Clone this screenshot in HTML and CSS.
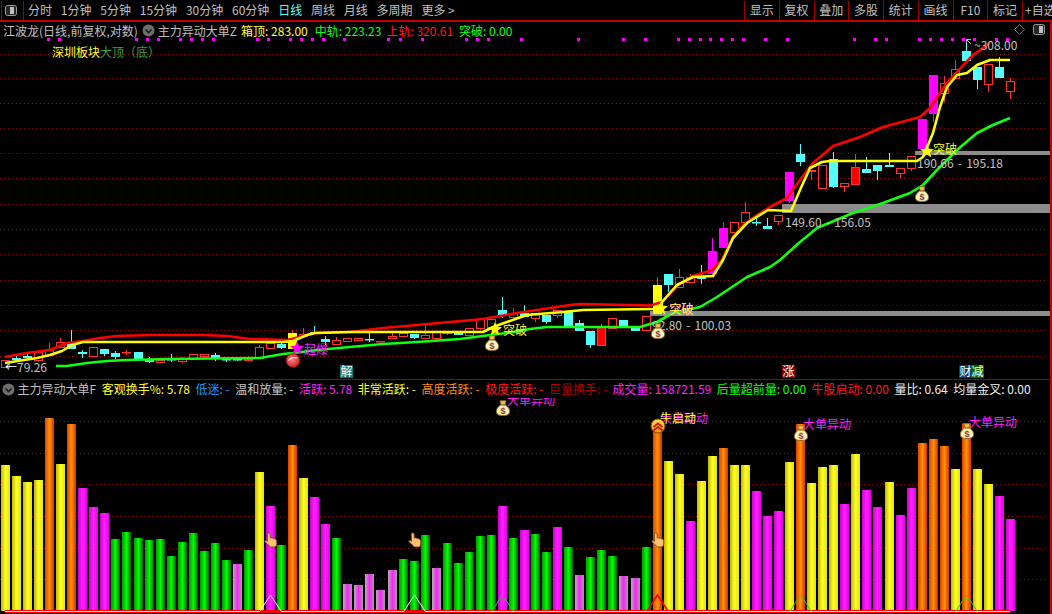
FILE: index.html
```html
<!DOCTYPE html>
<html lang="zh-CN">
<head>
<meta charset="utf-8">
<title>江波龙 日线</title>
<link rel="stylesheet" href="styles.css">
</head>
<body>
<div class="app">
  <header class="toolbar">
    <span class="panel-toggle">
      <svg width="12" height="11" viewBox="0 0 12 11"><rect x="0.5" y="0.5" width="11" height="10" rx="2" class="tg-box"/><rect x="5" y="2" width="4" height="7" class="tg-fill"/></svg>
    </span>
    <nav class="periods">
      <span>分时</span><span>1分钟</span><span>5分钟</span><span>15分钟</span><span>30分钟</span><span>60分钟</span>
      <span class="active">日线</span><span>周线</span><span>月线</span><span>多周期</span><span>更多 &gt;</span>
    </nav>
    <nav class="tools">
      <span>显示</span><span>复权</span><span>叠加</span><span>多股</span><span>统计</span><span>画线</span><span>F10</span><span>标记</span><span class="last">+自选</span>
    </nav>
  </header>

  <section class="pane price-pane">
    <svg id="price" class="chart" viewBox="0 22 1050 357" width="1050" height="357"></svg>
    <div class="legend">
      <span class="stock">江波龙(日线,前复权,对数)</span>
      <svg class="chev" width="13" height="13" viewBox="0 0 13 13"><circle cx="6.5" cy="6.5" r="6" class="chev-ball"/><path d="M3.5 5.5 6.5 8.5 9.5 5.5" class="chev-mark"/></svg>
      <span class="name">主力异动大单Z</span>
      <span class="yellow lg1">箱顶: 283.00</span>
      <span class="green lg2">中轨: 223.23</span>
      <span class="red lg3">上轨: 320.61</span>
      <span class="green lg4">突破: 0.00</span>
    </div>
    <div class="corner-icons">
      <svg width="11" height="11" viewBox="0 0 11 11"><path d="M5.5 .5 10.5 5.5 5.5 10.5 .5 5.5Z" class="dia"/></svg>
      <svg width="12" height="11" viewBox="0 0 12 11"><rect x="0.5" y="0.5" width="11" height="10" rx="2" class="tg-box"/><rect x="6" y="2" width="4" height="7" class="tg-fill"/></svg>
    </div>
  </section>

  <section class="pane ind-pane">
    <svg id="ind" class="chart" viewBox="0 380 1050 234" width="1050" height="234"></svg>
    <div class="legend ind-legend">
      <svg class="chev" width="13" height="13" viewBox="0 0 13 13"><circle cx="6.5" cy="6.5" r="6" class="chev-ball"/><path d="M3.5 5.5 6.5 8.5 9.5 5.5" class="chev-mark"/></svg>
      <span class="name">主力异动大单F</span>
      <span class="yellow">客观换手%: 5.78</span>
      <span class="blue">低迷: -</span>
      <span class="gray">温和放量: -</span>
      <span class="magenta">活跃: 5.78</span>
      <span class="yellow">非常活跃: -</span>
      <span class="orange">高度活跃: -</span>
      <span class="red">极度活跃: -</span>
      <span class="darkred">巨量换手: -</span>
      <span class="magenta">成交量: 158721.59</span>
      <span class="green">后量超前量: 0.00</span>
      <span class="red">牛股启动: 0.00</span>
      <span class="white">量比: 0.64</span>
      <span class="white">均量金叉: 0.00</span>
    </div>
  </section>
</div>
<script src="chart.js"></script>
</body>
</html>
```
FILE: styles.css
```css
* { box-sizing: border-box; }
html, body { margin: 0; padding: 0; background: #000; }
body { font-family: "Noto Sans CJK SC", "Liberation Sans", sans-serif; font-size: 12px; line-height: 16px; color: #c0c0c0; }
.app { width: 1052px; height: 614px; background: #000; display: flex; flex-direction: column; overflow: hidden; }

.toolbar { flex: 0 0 22px; height: 22px; display: flex; align-items: stretch; border-bottom: 2px solid #c00000; }
.panel-toggle { margin-left: 1px; width: 23px; margin-top: 1px; padding-right: 3px; border-left: 1px solid #a00000; border-right: 1px solid #a00000; display: flex; align-items: center; justify-content: center; }
.tg-box { fill: #262626; stroke: #9a9a9a; }
.tg-fill { fill: #c0c0c0; }
.periods { display: flex; gap: 8.8px; padding-left: 4px; align-items: center; white-space: nowrap; }
.periods .active { color: #54ffff; }
.tools { margin-left: auto; width: 308px; display: flex; overflow: hidden; padding-top: 1px; }
.tools span { flex: 0 0 34.75px; border-left: 1px solid #a00000; text-align: center; line-height: 18px; white-space: nowrap; }
.tools .last { text-align: left; padding-left: 2px; }

.pane { position: relative; border-right: 2px solid #c00000; width: 1052px; }
.price-pane { height: 358px; border-bottom: 1px solid #a00000; }
.ind-pane { height: 234px; }
.chart { position: absolute; left: 0; top: 0; display: block; }

.legend { position: relative; display: flex; align-items: center; height: 17px; padding-left: 3px; white-space: nowrap; }
.ind-legend { height: 18px; background: #000; padding-left: 2px; gap: 5.5px; }
.chev { flex: none; margin: 0 3px 0 4px; }
.ind-legend .chev { margin: 0 -3px 0 0; }
.chev-ball { fill: #6e6e6e; }
.chev-mark { fill: none; stroke: #1c1c1c; stroke-width: 1.6; }
.lg1 { margin-left: 4px; }
.lg2 { margin-left: 7px; }
.lg3 { margin-left: 5px; }
.lg4 { margin-left: 6px; }
.corner-icons { position: absolute; right: 5px; top: 2px; display: flex; align-items: center; gap: 8px; }
.dia { fill: none; stroke: #777; }

.yellow { color: #ffff30; }
.green { color: #16ff16; }
.red { color: #ff1a1a; }
.blue { color: #1e96ff; }
.gray { color: #c8c8c8; }
.magenta { color: #ff20ff; }
.orange { color: #ff8a1a; }
.darkred { color: #b00000; }
.white { color: #f0f0f0; }

.grid { stroke: #8a0f0f; stroke-width: 1; stroke-dasharray: 1 3; }
.box { fill: #8c8c8c; }
.line { fill: none; stroke-width: 2.6; stroke-linejoin: round; }
.l-red { stroke: #ff0000; }
.l-yellow { stroke: #ffff00; }
.l-green { stroke: #10ff10; }
.c-c { fill: #54fcfc; stroke: #54fcfc; }
.c-r { fill: #000; stroke: #ff3232; }
.c-R { fill: #ff0000; stroke: #ff3232; }
.c-m { fill: #ff00ff; stroke: #ff00ff; }
.c-y { fill: #ffff00; stroke: #ff3232; }
.c-y.body { stroke: #ffff00; }
.wick { stroke-width: 1; fill: none; }
.dot { fill: #ff00ff; }
.t { font-family: "Noto Sans CJK SC", "Liberation Sans", sans-serif; font-size: 12px; }
.t-range { word-spacing: 1.5px; }
.t-gray { fill: #c0c0c0; }
.t-yellow { fill: #ffff30; }
.t-magenta { fill: #ff20ff; }
.t-board { fill: #ffff30; }
.t-top { fill: #3ca03c; }
.t-white { fill: #fff; }
.arrow { stroke: #c0c0c0; fill: none; }
.badge-teal { fill: #007878; }
.badge-red { fill: #800000; }
.badge-blue { fill: #0c3c6c; }
.badge-green { fill: #006c00; }
.star-y { fill: #ffff00; }
.star-m { fill: #ff00ff; }
.tri { fill: none; stroke-width: 1; }
.tri-w { stroke: #fff; }
.tri-g { stroke: #20d020; }
.tri-r { stroke: #ff0000; stroke-width: 1.6; }
.baseline { fill: #ff0000; }
.base-white { fill: #ffe0e0; }
.bag-body { fill: #fff2b8; stroke: #8a6a28; stroke-width: 1; }
.bag-neck { fill: #f0c040; stroke: #8a6a28; stroke-width: .8; }
.bag-s { fill: #8a3a3a; font-family: "Liberation Sans", sans-serif; font-size: 9px; font-weight: bold; text-anchor: middle; }
.hand { fill: #ffc070; stroke: #7a4a18; stroke-width: 1; stroke-linejoin: round; }
.ball { fill: url(#ballGrad); stroke: #601010; stroke-width: .5; }
.ball-hl { fill: none; stroke: #fff; stroke-width: 1.2; opacity: .85; }
.gold { fill: url(#goldGrad); stroke: #7a4a10; stroke-width: 1; }
.gold-mark { fill: none; stroke: #c02010; stroke-width: 1.8; }
```
FILE: chart.js
```javascript
var X = function (i) { return 5.5 + 11.044 * i; };
var NS_DEFS =
  '<defs>' +
  grad('gy', '#c0b800', '#ffff28', '#e4e400') +
  grad('go', '#e04000', '#ff9400', '#d83000') +
  grad('gg', '#009800', '#00ff00', '#006000') +
  grad('gm', '#d000d0', '#ff20ff', '#e800e8') +
  grad('gx', '#b0b0b0', '#ff20ff', '#a0a0a0') +
  '<radialGradient id="ballGrad" cx=".45" cy=".45" r=".6"><stop offset="0" stop-color="#ff8080"/><stop offset="1" stop-color="#c81818"/></radialGradient>' +
  '<linearGradient id="goldGrad" x2="0" y2="1"><stop offset="0" stop-color="#ffe060"/><stop offset="1" stop-color="#f09000"/></linearGradient>' +
  '<symbol id="bag" viewBox="0 0 14 16" overflow="visible">' +
  '<path class="bag-body" d="M4.5 5C1 7.5 0 10 .5 12.5 1 15 4 15.5 7 15.5S13 15 13.5 12.5C14 10 13 7.500 9.500 5Z"/>' +
  '<path class="bag-neck" d="M4 .7H10L9 4.800H5Z"/>' +
  '<text class="bag-s" x="7" y="13.500">$</text></symbol>' +
  '<symbol id="hand" viewBox="0 0 14 16" overflow="visible">' +
  '<path class="hand" d="M3 1C3.300 .2 5.700 .2 6 1L6.300 6C7 5.400 8 5.500 8.400 6.200 9 5.700 10 6 10.300 6.800 11.300 6.500 12.700 7.200 13 8.500 13.500 10.500 13.300 13.300 12 15.500H6.500C5 14.500 3 12 .8 10.200 .1 9.400 .7 8 1.800 8.300L3.300 9.500Z"/>' +
  '</symbol>' +
  '<symbol id="star" viewBox="0 0 14 14" overflow="visible"><path d="M7 0 8.900 4.800 14 5.200 10 8.400 11.400 13.500 7 10.600 2.600 13.500 4 8.400 0 5.200 5.100 4.800Z"/></symbol>' +
  '</defs>';

function grad(id, a, b, c) {
  return '<linearGradient id="' + id + '"><stop offset="0" stop-color="' + a + '"/><stop offset=".5" stop-color="' + b + '"/><stop offset="1" stop-color="' + c + '"/></linearGradient>';
}
function text(x, y, cls, s) { return '<text class="t ' + cls + '" x="' + x + '" y="' + y + '">' + s + '</text>'; }
function use(id, x, y, w, h, cls) { return '<use href="#' + id + '" x="' + (x - w / 2) + '" y="' + (y - h / 2) + '" width="' + w + '" height="' + h + '"' + (cls ? ' class="' + cls + '"' : '') + '/>'; }
function poly(cls, pts) { return '<polyline class="line ' + cls + '" points="' + pts + '"/>'; }
function hline(y) { return '<line class="grid" x1="0" x2="1048" y1="' + y + '.5" y2="' + y + '.5"/>'; }

/* [type, bodyTop, bodyBottom, wickTop, wickBottom] by bar index */
var candles = [
  ['r',360,367,360,367],['c',358,359,355,361],['c',356,357,354,358],['r',352,360,352,362],['r',350,355,343,355],
  ['r',342,347,338,347],['c',342,348,330,348],['c',352,353,350,358],['r',347,356,347,356],['c',349,353,349,356],
  ['c',353,356,351,359],['r',352,352,350,355],['c',352,358,352,361],['c',360,361,357,363],['r',360,362,360,363],
  ['c',359,359,354,362],['r',358,361,357,363],['r',354,359,354,359],['r',354,356,354,356],['c',355,358,353,361],
  ['c',359,359,358,362],['c',359,359,357,361],['r',359,360,356,361],['r',347,358,345,358],['r',343,348,343,348],
  ['c',344,347,342,349],['y',333,348,330,348],['r',334,336,328,336],['c',332,333,326,333],['c',339,341,336,345],
  ['r',340,344,337,344],['r',338,341,338,341],['r',338,340,338,340],['c',339,339,333,342],['r',341,341,341,342],
  ['r',336,338,333,338],['r',333,336,331,336],['c',334,337,334,339],['r',335,338,325,338],['r',332,338,332,340],
  ['r',332,333,331,335],['c',331,334,331,335],['r',328,335,328,336],['r',319,328,319,330],['r',319,328,317,328],
  ['c',310,315,297,318],['r',313,317,308,317],['c',313,316,305,316],['r',313,318,313,322],['c',315,321,315,324],
  ['r',310,315,310,318],['c',312,325,312,325],['c',323,330,320,330],['c',331,344,331,348],['R',327,345,324,345],
  ['r',318,328,318,328],['c',320,327,320,327],['c',326,330,326,330],['r',316,330,316,330],['y',285,313,277,313],
  ['c',274,284,274,292],['r',277,287,269,287],['r',277,282,274,282],['c',277,278,265,284],['m',251,273,238,273],
  ['m',228,247,222,247],['r',222,232,222,235],['r',212,222,202,222],['c',222,222,218,226],['c',226,228,218,228],
  ['r',215,221,215,225],['m',172,200,172,203],['c',154,161,144,166],['r',170,171,170,180],['r',165,188,165,188],
  ['c',159,186,152,188],['r',183,186,183,192],['R',167,184,154,184],['c',169,172,157,172],['c',165,170,165,180],
  ['c',165,166,153,166],['r',168,173,168,178],['r',156,168,156,171],['m',119,148,119,148],['m',75,113,75,122],
  ['r',83,93,76,102],['r',69,78,60,78],['c',51,60,40,60],['c',67,79,67,89],['r',64,84,64,92],
  ['c',67,77,57,77],['r',81,91,78,99]
];

var dots = [48,59,136,147,158,180,191,202,213,257,268,290,301,312,323,344,388,400,422,466,477,488,521,578,623,645,678,689,700,710,721,732,743,765,787,854,875,886,919,930,941,952,963,974,996,1007];

var redPts = '5,357 27,353 50,350 67,343 83,341 100,338 117,336 150,335 203,335 227,336 250,339 287,340 300,337 315,333 350,332 383,328 417,325 450,322 483,319 517,313 550,308 570,305 580,304 650,305.500 662,302 678,285 693,276 712,270 722,260 733,237 743,225 757,215 770,207 787,198 800,180 813,163 833,146 860,137 883,127 920,117 930,108 947,83 957,72 973,55 990,43';
var yellowPts = '5,363 37,358 50,355 62,351 72,345 83,342 283,342 293,341 307,335 315,333 350,332 483,332 493,327 507,322 527,315 563,312 583,310 653,309 661,309 662,302 677,285 693,277 713,276 723,260 733,238 747,223 768,210 791,211 800,190 810,168 822,162 830,161 917,161 923,157 933,133 940,107 947,87 957,75 967,73 977,65 990,60 1010,60';
var greenPts = '56,366 67,366 87,363 107,361 127,360 167,359 260,358 283,354 293,353 317,350 350,347 383,344 417,342 460,339 490,335 507,333 530,329 547,327 617,327 640,327 657,322 673,313 700,307 717,297 747,277 770,267 780,260 800,242 817,228 853,213 883,203 910,193 923,185 937,170 957,150 977,133 993,125 1010,118';

var p = NS_DEFS;
[54,78,103,128,153,178,204,229,254,280,305,330,356].forEach(function (y) { p += hline(y); });
dots.forEach(function (x) { p += '<rect class="dot" x="' + (x - 1) + '" y="38" width="3" height="3"/>'; });
p += '<rect class="box" x="650" y="311" width="400" height="5"/><rect class="box" x="782" y="204" width="268" height="9"/><rect class="box" x="915" y="151" width="135" height="4"/>';

candles.forEach(function (c, i) {
  var cx = Math.round(X(i) - .5) + .5, k = 'c-' + c[0];
  var wk = c[0] === 'y' ? 'c-r' : k;
  p += '<line class="wick ' + wk + '" x1="' + cx + '" x2="' + cx + '" y1="' + c[3] + '" y2="' + c[4] + '"/>';
  p += '<rect class="' + k + ' body" x="' + (cx - 4) + '" y="' + (c[1] + .5) + '" width="8" height="' + Math.max(c[2] - c[1], .5) + '"/>';
});
p += poly('l-green', greenPts) + poly('l-red', redPts) + poly('l-yellow', yellowPts);

p += text(52, 57, 't-board', '深圳板块') + text(100, 57, 't-top', '大顶（底）');
p += text(652, 330, 't-gray t-range', '92.80 - 100.03');
p += text(785, 227, 't-gray t-range', '149.60 - 156.05');
p += text(917, 168, 't-gray t-range', '190.66 - 195.18');
p += text(5, 372, 't-white', '←') + text(17, 372, 't-gray', '79.26');
p += '<path class="arrow" d="M966.500 44V39.500H971M966.500 39.500 971 44"/>';
p += text(974, 50, 't-gray', '~308.00');

p += use('star', 661, 308, 14, 14, 'star-y') + text(669, 314, 't-magenta', '突破') + text(669.5, 314, 't-yellow', '突破');
p += use('star', 495, 329, 14, 14, 'star-y') + text(503, 335, 't-yellow', '突破');
p += use('star', 927, 151, 14, 14, 'star-y') + text(933, 154, 't-yellow', '突破');
p += use('star', 297, 348, 14, 14, 'star-m') + text(304, 354, 't-magenta', '起爆');

p += use('bag', 492, 343, 14, 16) + use('bag', 658, 331, 14, 16) + use('bag', 922, 194, 14, 16);
p += '<circle class="ball" cx="293" cy="360.500" r="7"/><path class="ball-hl" d="M288.500 360.500C290 358 294 357 297.500 358"/>';

[['badge-teal', 340, 13, '解'], ['badge-red', 782, 13, '涨'], ['badge-blue', 959, 12, '财'], ['badge-green', 971, 13, '减']].forEach(function (b) {
  p += '<rect class="' + b[0] + '" x="' + b[1] + '" y="365" width="' + b[2] + '" height="13"/>';
  p += text(b[1] + .5, 376, 't-white', b[3]);
});
document.getElementById('price').innerHTML = p;

/* indicator: [zoomedTop, gradient] */
var bars = [[165,'y'],[198,'y'],[216,'y'],[210,'y'],[24,'o'],[162,'y'],[42,'o'],[234,'m'],[291,'m'],[309,'m'],[387,'g'],[366,'g'],[384,'g'],[390,'g'],[387,'g'],[438,'g'],[396,'g'],[369,'g'],[423,'g'],[399,'g'],[450,'g'],[462,'x'],[420,'g'],[186,'y'],[288,'m'],[405,'g'],[105,'o'],[204,'y'],[261,'m'],[342,'m'],[384,'g'],[522,'x'],[525,'x'],[492,'x'],[540,'x'],[480,'x'],[447,'g'],[453,'g'],[375,'g'],[474,'x'],[399,'g'],[459,'g'],[426,'g'],[378,'g'],[375,'g'],[288,'m'],[384,'g'],[360,'m'],[372,'g'],[426,'g'],[351,'m'],[411,'g'],[495,'x'],[441,'g'],[420,'g'],[438,'g'],[498,'x'],[504,'x'],[411,'g'],[40,'o'],[153,'y'],[192,'y'],[333,'m'],[213,'y'],[138,'y'],[114,'o'],[165,'y'],[165,'y'],[243,'m'],[318,'m'],[303,'m'],[156,'y'],[42,'o'],[219,'y'],[171,'y'],[165,'y'],[282,'m'],[132,'y'],[240,'m'],[291,'m'],[216,'y'],[315,'m'],[234,'m'],[99,'o'],[87,'o'],[108,'o'],[177,'y'],[40,'o'],[177,'y'],[222,'y'],[258,'m'],[327,'m']];

var q = NS_DEFS;
[421,453,484,516,548,579].forEach(function (y) { q += hline(y); });
bars.forEach(function (b, i) {
  var top = 410 + b[0] / 3;
  q += '<rect fill="url(#g' + b[1] + ')" x="' + Math.round(X(i) - 4.5) + '" y="' + top + '" width="9" height="' + (611 - top) + '"/>';
});
q += '<rect class="baseline" x="5" y="610" width="1005" height="3"/><rect class="base-white" x="5" y="611" width="1005" height="1"/>';
[260, 404].forEach(function (x) { q += '<rect class="baseline" x="' + x + '" y="610" width="21" height="3"/>'; });
[[270.5,'tri-w'],[414.5,'tri-w'],[502.5,'tri-g'],[657.5,'tri-r'],[800.5,'tri-g'],[966.5,'tri-g']].forEach(function (t) {
  q += '<path class="tri ' + t[1] + '" d="M' + (t[0] - 10.5) + ' 611 ' + t[0] + ' 595 ' + (t[0] + 10.5) + ' 611"/>';
});
q += text(507, 405, 't-magenta', '大单异动') + use('bag', 503, 408, 14, 16);
q += text(660, 423, 't-magenta', '大单异动') + text(660, 423, 't-yellow', '牛启动');
q += '<circle class="gold" cx="658" cy="426" r="7"/><path class="gold-mark" d="M653.500 427 658 423.500 662.500 427M653.500 430.500 658 427 662.500 430.500"/>';
q += text(803, 429, 't-magenta', '大单异动') + text(969, 427, 't-magenta', '大单异动');
q += use('bag', 801, 433, 14, 16) + use('bag', 967, 431, 14, 16);
q += use('hand', 271, 540, 13, 15) + use('hand', 415, 540, 13, 15) + use('hand', 658, 540, 13, 15);
document.getElementById('ind').innerHTML = q;
```
